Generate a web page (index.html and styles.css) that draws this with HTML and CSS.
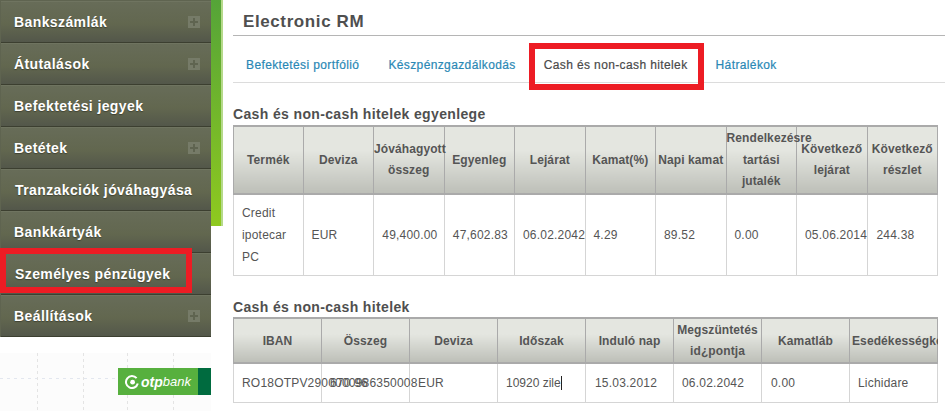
FILE: index.html
```
<!DOCTYPE html>
<html lang="hu">
<head>
<meta charset="utf-8">
<title>Electronic RM</title>
<link rel="stylesheet" href="styles.css">
</head>
<body>
<div class="page">
  <aside class="side">
    <div class="greenbar"></div>
    <nav class="menu">
      <a class="item">Bankszámlák<span class="plus"></span></a>
      <a class="item">Átutalások<span class="plus"></span></a>
      <a class="item">Befektetési jegyek</a>
      <a class="item">Betétek<span class="plus"></span></a>
      <a class="item shift">Tranzakciók jóváhagyása</a>
      <a class="item">Bankkártyák</a>
      <a class="item shift">Személyes pénzügyek</a>
      <a class="item">Beállítások<span class="plus"></span></a>
    </nav>
    <div class="promo">
      <div class="logo">
        <div class="logo-main">
          <svg class="logo-mark" viewBox="0 0 14 14" width="14" height="14"><path d="M11.6 3.2A6 6 0 1 0 12.8 8.6" fill="none" stroke="#fff" stroke-width="2"/><circle cx="7.6" cy="7.2" r="2.4" fill="#fff"/></svg>
          <span class="otp">otp</span><span class="bank">bank</span>
        </div>
        <div class="logo-end"></div>
      </div>
    </div>
    <div class="mark mark-side"></div>
  </aside>
  <main class="main">
    <h1 class="title">Electronic RM</h1>
    <div class="tabs">
      <a class="tab t1">Befektetési portfólió</a>
      <a class="tab t2">Készpénzgazdálkodás</a>
      <a class="tab t3 active">Cash és non-cash hitelek</a>
      <a class="tab t4">Hátralékok</a>
    </div>
    <div class="mark mark-tab"></div>
    <h2 class="h h1st">Cash és non-cash hitelek egyenlege</h2>
    <table class="grid g1">
      <thead>
        <tr>
          <th>Termék</th><th>Deviza</th><th>Jóváhagyott összeg</th><th>Egyenleg</th><th>Lejárat</th><th>Kamat(%)</th><th>Napi kamat</th><th>Rendelkezésre tartási jutalék</th><th>Következő lejárat</th><th>Következő részlet</th>
        </tr>
      </thead>
      <tbody>
        <tr>
          <td>Credit ipotecar PC</td><td>EUR</td><td class="r">49,400.00</td><td class="r">47,602.83</td><td>06.02.2042</td><td>4.29</td><td>89.52</td><td>0.00</td><td>05.06.2014</td><td class="last">244.38</td>
        </tr>
      </tbody>
    </table>
    <h2 class="h h2nd">Cash és non-cash hitelek</h2>
    <div class="clip">
      <table class="grid g2">
        <thead>
          <tr>
            <th>IBAN</th><th>Összeg</th><th>Deviza</th><th>Időszak</th><th>Induló nap</th><th>Megszüntetés id¿pontja</th><th>Kamatláb</th><th class="esed">Esedékességkor</th>
          </tr>
        </thead>
        <tbody>
          <tr>
            <td class="nw">RO18OTPV2900000986350008</td><td class="nw">670.96</td><td>EUR</td><td><span class="caret">10920 zile</span></td><td class="last">15.03.2012</td><td>06.02.2042</td><td class="last">0.00</td><td>Lichidare</td>
          </tr>
        </tbody>
      </table>
    </div>
  </main>
</div>
</body>
</html>
```
FILE: styles.css
```
* { box-sizing: border-box; }
html, body { margin: 0; padding: 0; background: #fff; }
body { width: 945px; height: 411px; overflow: hidden; font-family: "Liberation Sans", Arial, sans-serif; }
.page { display: flex; position: relative; height: 411px; }

.side { width: 233px; flex: none; position: relative; }
.greenbar { position: absolute; left: 0; top: 0; width: 223px; height: 226px; background-image: linear-gradient(180deg, #55a438 0, #8fc91f 100%); border-right: 2px solid #b5d98a; }
.menu { position: relative; width: 211px; padding-top: 1px; padding-left: 1px; display: flex; flex-direction: column; background: #5f6450; }
.item { display: flex; align-items: center; justify-content: space-between; height: 42px; padding: 0 11px 0 13px; font-size: 14px; font-weight: 700; letter-spacing: .4px; color: #fff; background: linear-gradient(180deg, #676c58 0, #62674f 55%, #53574a 100%); border-bottom: 1px solid #3c3f30; border-top: 1px solid #6f7460; text-shadow: 0 1px 1px #3e4132; }
.item.shift { padding-left: 14px; }
.plus { width: 12px; height: 12px; background: #767b68; position: relative; }
.plus::before, .plus::after { content: ""; position: absolute; background: #5f6450; }
.plus::before { left: 2px; right: 2px; top: 5px; height: 2px; }
.plus::after { top: 2px; bottom: 2px; left: 5px; width: 2px; }

.promo { width: 211px; height: 58px; margin-top: 16px; padding-top: 15px; background-color: #fcfcfc;
  background-image:
    linear-gradient(180deg, #e4e4e4 50%, transparent 50%),
    linear-gradient(180deg, #e4e4e4 50%, transparent 50%),
    linear-gradient(180deg, #e4e4e4 50%, transparent 50%),
    linear-gradient(180deg, #e4e4e4 50%, transparent 50%),
    linear-gradient(90deg, #e3e7ef 50%, transparent 50%);
  background-size: 1px 6px, 1px 6px, 1px 6px, 1px 6px, 7px 1px;
  background-position: 37px 0, 83px 0, 127px 0, 173px 0, 0 25px;
  background-repeat: repeat-y, repeat-y, repeat-y, repeat-y, repeat-x; }
.logo { display: flex; width: 211px; }
.logo-main { width: 80px; height: 27px; margin-left: 118px; background: #57b03e; color: #fff; display: flex; align-items: center; padding-left: 7px; flex: none; }
.logo-end { width: 13px; height: 27px; background: #006b3f; flex: none; }
.logo-mark { margin-right: 2px; flex: none; }
.otp { font-weight: 700; font-style: italic; font-size: 14px; }
.bank { font-style: italic; font-size: 13px; }

.mark { position: absolute; border: 6px solid #ed1c24; }
.mark-side { left: 0; top: 248px; width: 192px; height: 45px; }

.main { width: 705px; flex: none; position: relative; }
.title { margin: 0 0 0 10px; height: 36px; padding-top: 12px; font-size: 17px; line-height: 20px; font-weight: 700; color: #4f4f4f; letter-spacing: .6px; }
.main::before { content: ""; position: absolute; left: 0; top: 35px; width: 712px; height: 1px; background: #b5b5b5; }
.tabs { height: 47px; display: flex; align-items: center; width: 712px; border-bottom: 1px solid #dcdcdc; font-size: 12px; letter-spacing: .38px; padding-top: 11px; font-weight: 400; -webkit-text-stroke: .2px; }
.tab { color: #2a88b5; white-space: nowrap; }
.t1 { margin-left: 13px; }
.t2 { margin-left: 29px; }
.t3 { margin-left: 28px; color: #4a4a4a; }
.t4 { margin-left: 28px; }
.mark-tab { left: 296px; top: 43px; width: 175px; height: 47px; }

.h { margin: 0; font-size: 14px; line-height: 16px; font-weight: 700; color: #4f4f4f; letter-spacing: .36px; }
.h1st { padding-top: 23px; height: 42px; }
.h2nd { margin-top: 23px; height: 18px; }

.grid { border-collapse: collapse; table-layout: fixed; font-size: 12px; color: #555; width: 705px; }
.grid th { padding: 0; border: 2px solid #aaa; border-left: 1px solid #fff; border-right: 1px solid #aaa; font-size: 12px; font-weight: 700; letter-spacing: .1px; color: #555; background: linear-gradient(180deg, #e4e6e0 0, #e4e6e0 35%, #bdbfb8 100%); text-align: center; }
.grid th:first-child { border-left: 1px solid #aaa; }
.g1 th { height: 66px; padding-top: 1px; line-height: 21.5px; }
.g1 th:first-child { width: 69.5px; }
.g2 th { height: 45px; padding-top: 1px; line-height: 21px; }
.grid td { padding: 0 8px; border: 1px solid #d5d5d5; line-height: 22px; vertical-align: middle; letter-spacing: .2px; }
.g1 td { height: 82px; }
.g2 td { height: 39px; }
.grid td.r { text-align: right; padding: 0 6px 0 0; }
.grid td.last { padding-left: 9px; }
.nw { white-space: nowrap; }
.clip { width: 705px; overflow: hidden; }
.caret { border-right: 1px solid #222; letter-spacing: 0; }
.grid th.esed { padding-left: 2px; }
```
